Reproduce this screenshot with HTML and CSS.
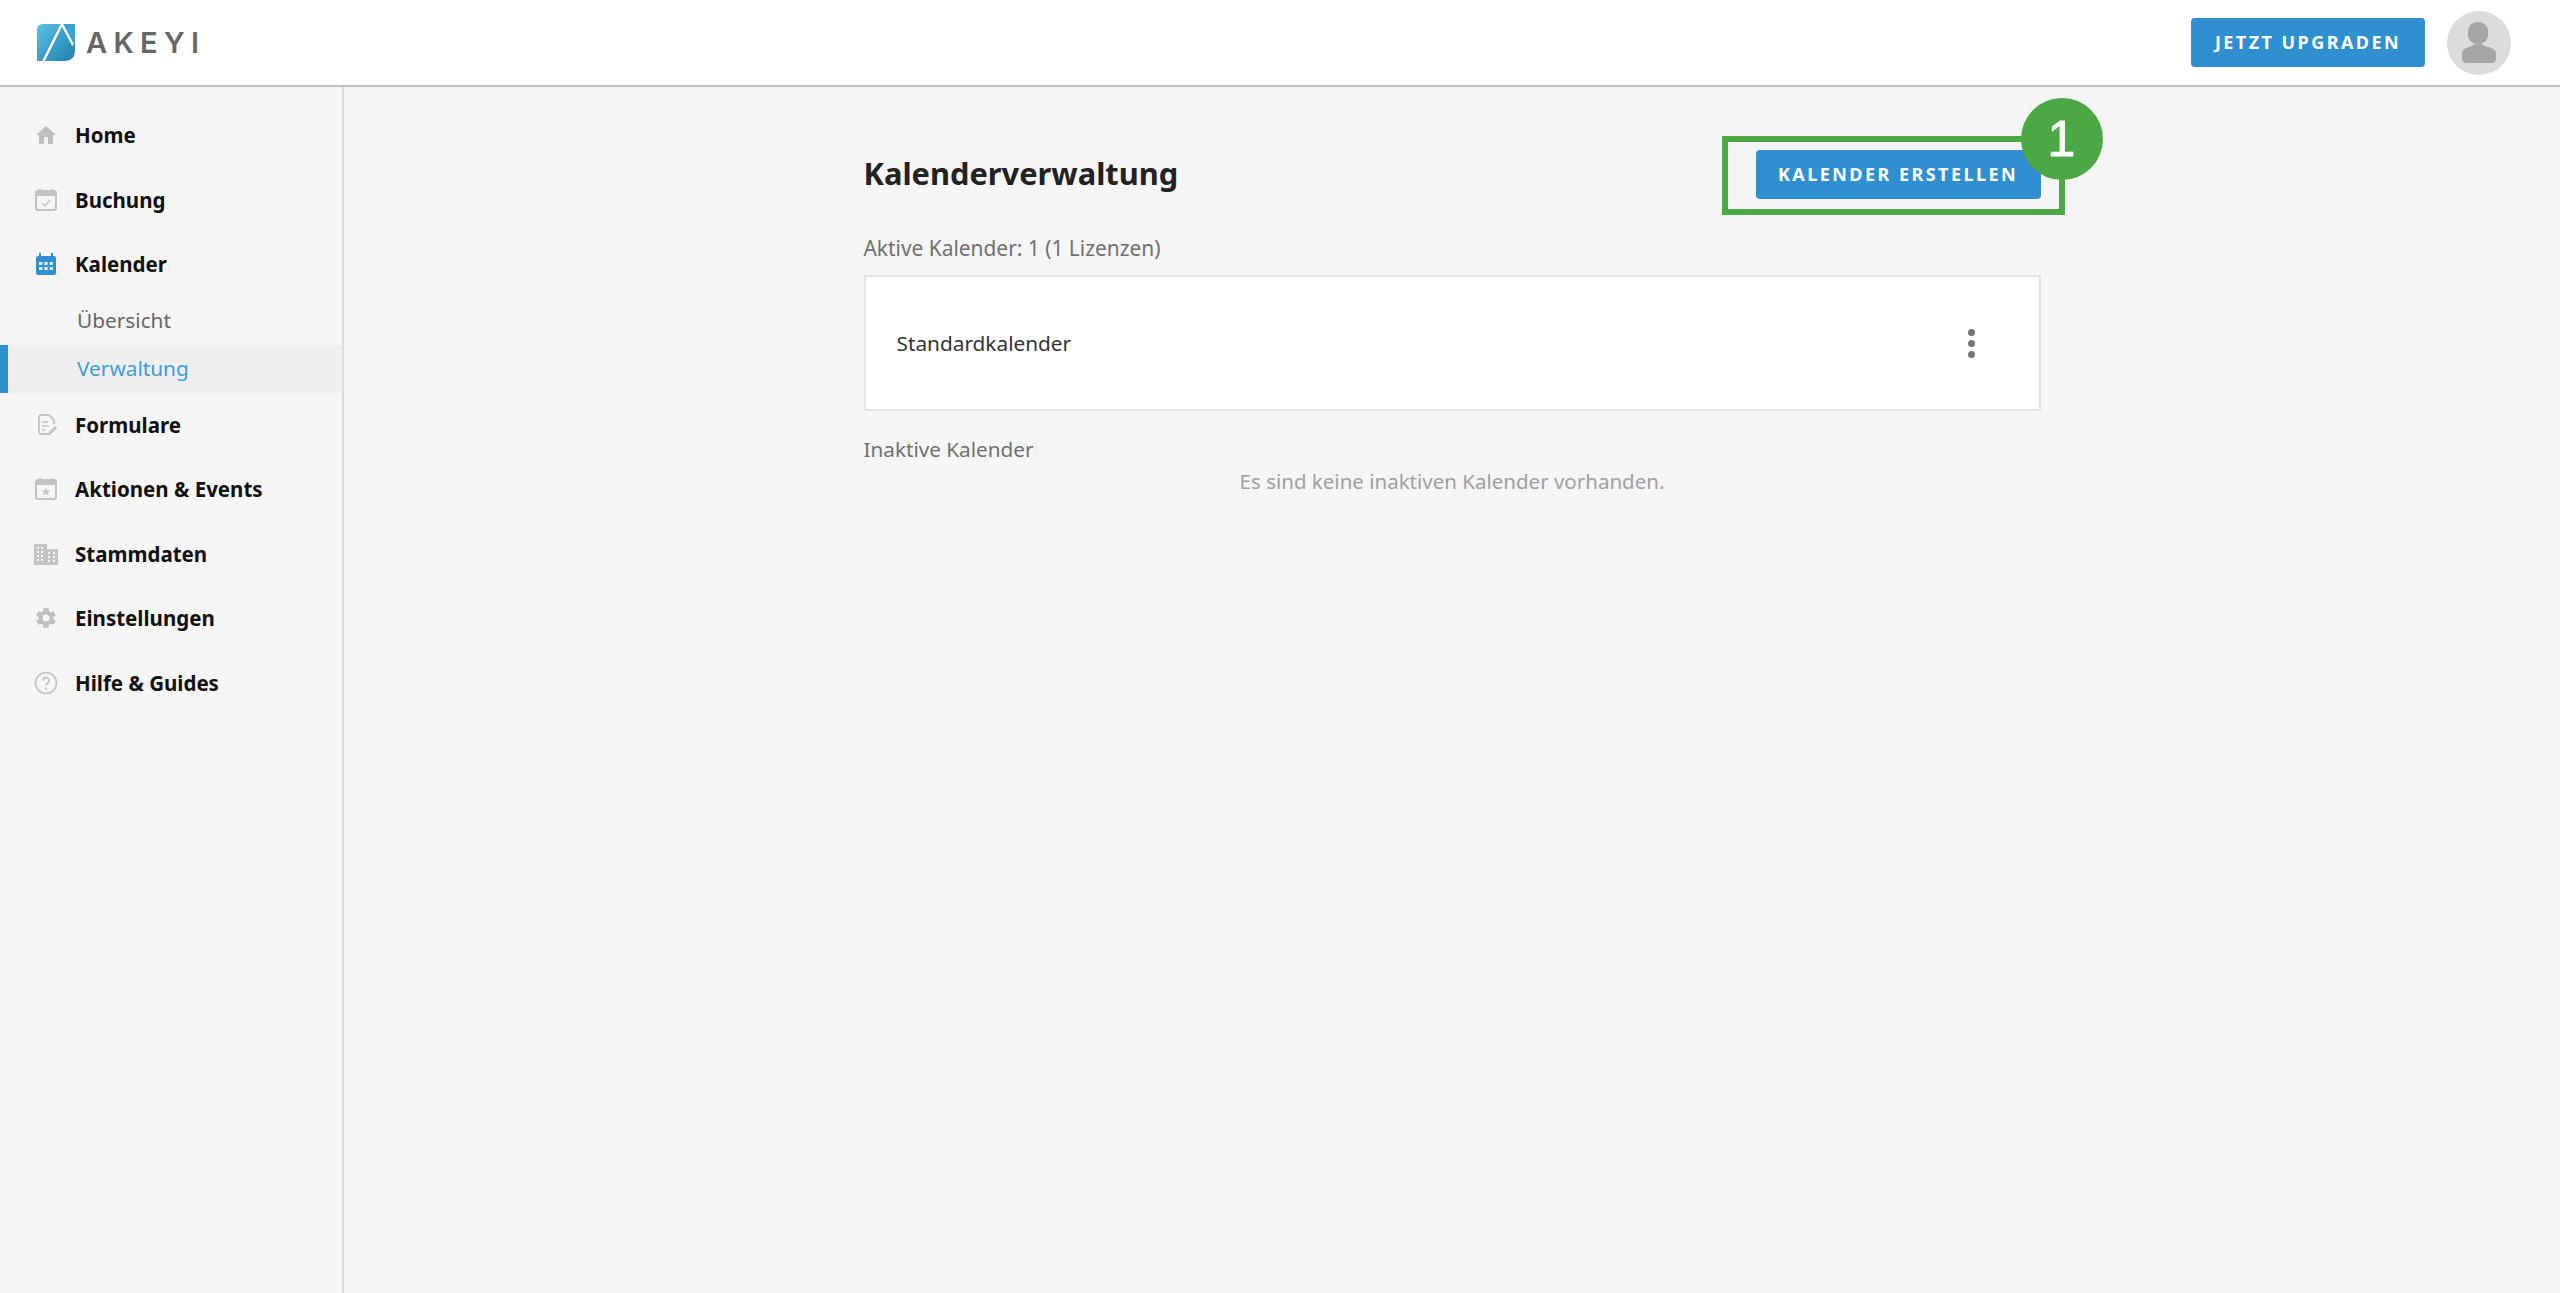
FILE: index.html
```html
<!DOCTYPE html>
<html lang="de">
<head>
<meta charset="utf-8">
<title>AKEYI – Kalenderverwaltung</title>
<link rel="stylesheet" href="styles.css">
</head>
<body>
<header class="topbar">
  <a class="logo">
    <svg class="logo-mark" viewBox="0 0 38 37" aria-hidden="true">
      <defs>
        <linearGradient id="lg" x1="0" y1="0" x2="1" y2="1">
          <stop offset="0" stop-color="#5cc0e4"/>
          <stop offset="1" stop-color="#1f7fae"/>
        </linearGradient>
      </defs>
      <path d="M6 0H38V26Q38 37 27 37H0V6Q0 0 6 0Z" fill="url(#lg)"/>
      <path d="M6 38L25 0L36 21" fill="none" stroke="#fff" stroke-width="2.4"/>
      <path d="M26.5 0H38V21Z" fill="#37a3d0"/>
    </svg>
    <span class="logo-text">AKEYI</span>
  </a>
  <div class="topbar-right">
    <button class="btn btn-upgrade">JETZT UPGRADEN</button>
    <span class="avatar">
      <svg viewBox="0 0 64 64" aria-hidden="true"><rect x="21" y="11" width="20" height="22" rx="9" fill="#a6a6a6"/><path d="M15 42Q15 37 24 35.500L28 33H35L39 35.500Q49 37 49 42V47Q49 52 44 52H20Q15 52 15 47Z" fill="#a6a6a6"/></svg>
    </span>
  </div>
</header>

<div class="layout">
  <nav class="sidebar">
    <a class="nav-item">
      <svg class="nav-icon" viewBox="0 0 24 24"><path d="M10 21v-7h4v7h5v-9h3L12 3 2 12h3v9z" fill="#bfbfbf"/></svg>
      Home
    </a>
    <a class="nav-item">
      <svg class="nav-icon" viewBox="0 0 24 24"><path d="M4 3h16a2 2 0 0 1 2 2v15a2 2 0 0 1-2 2H4a2 2 0 0 1-2-2V5a2 2 0 0 1 2-2z" fill="none" stroke="#c4c4c4" stroke-width="2"/><path d="M2 3h20v5H2zM5 1h2v3H5zM17 1h2v3h-2z" fill="#c4c4c4"/><path d="M8 15l3 3 5-6" fill="none" stroke="#c4c4c4" stroke-width="1.5"/></svg>
      Buchung
    </a>
    <a class="nav-item">
      <svg class="nav-icon" viewBox="0 0 24 24"><path d="M5 1h2v3h10V1h2v3h1a2 2 0 0 1 2 2v15a2 2 0 0 1-2 2H4a2 2 0 0 1-2-2V6a2 2 0 0 1 2-2h1z" fill="#2f8fd0"/><path d="M5 10h3.500v3H5zM10.250 10h3.500v3h-3.500zM15.500 10H19v3h-3.500zM5 15h3.500v3H5zM10.250 15h3.500v3h-3.500zM15.500 15H19v3h-3.500z" fill="#d9ecf8"/></svg>
      Kalender
    </a>
    <a class="nav-sub">Übersicht</a>
    <a class="nav-sub nav-sub-active">Verwaltung</a>
    <a class="nav-item">
      <svg class="nav-icon" viewBox="0 0 24 24"><path d="M16 21H7a2 2 0 0 1-2-2V4a2 2 0 0 1 2-2h8l5 5v4" fill="none" stroke="#c4c4c4" stroke-width="1.800"/><path d="M8 9h6M8 13h7M8 17h3" stroke="#c4c4c4" stroke-width="1.600"/><path d="M14 22l1-3 6-6 2 2-6 6z" fill="#c4c4c4"/></svg>
      Formulare
    </a>
    <a class="nav-item">
      <svg class="nav-icon" viewBox="0 0 24 24"><path d="M4 3h16a2 2 0 0 1 2 2v15a2 2 0 0 1-2 2H4a2 2 0 0 1-2-2V5a2 2 0 0 1 2-2z" fill="none" stroke="#c4c4c4" stroke-width="2"/><path d="M2 3h20v5H2zM5 1h2v3H5zM17 1h2v3h-2z" fill="#c4c4c4"/><path d="M12 10.500l1.300 2.800 3 .3-2.300 2 .7 3-2.700-1.600-2.700 1.600.7-3-2.300-2 3-.3z" fill="#c4c4c4"/></svg>
      Aktionen &amp; Events
    </a>
    <a class="nav-item">
      <svg class="nav-icon" viewBox="0 0 24 24"><path fill-rule="evenodd" d="M0 2h13v5h11v16H0zM3 5v2h2V5zM7 5v2h2V5zM3 9v2h2V9zM7 9v2h2V9zM3 13v2h2v-2zM7 13v2h2v-2zM3 17v2h2v-2zM7 17v2h2v-2zM14 10v2h2v-2zM19 10v2h2v-2zM14 14v2h2v-2zM19 14v2h2v-2zM14 18v2h2v-2zM19 18v2h2v-2z" fill="#c4c4c4"/></svg>
      Stammdaten
    </a>
    <a class="nav-item">
      <svg class="nav-icon" viewBox="0 0 24 24"><path d="M19.400 13a7.500 7.500 0 0 0 0-2l2.400-1.800-2.300-4-2.800 1.100a7.500 7.500 0 0 0-1.700-1L14.500 2.300h-5L9 5.300a7.500 7.500 0 0 0-1.700 1L4.500 5.200l-2.300 4L4.600 11a7.500 7.500 0 0 0 0 2l-2.400 1.800 2.300 4 2.800-1.100a7.500 7.500 0 0 0 1.700 1l.5 3h5l.5-3a7.500 7.500 0 0 0 1.700-1l2.800 1.100 2.300-4zM12 15.500a3.500 3.500 0 1 1 0-7 3.500 3.500 0 0 1 0 7z" fill="#bfbfbf"/></svg>
      Einstellungen
    </a>
    <a class="nav-item">
      <svg class="nav-icon" viewBox="0 0 24 24"><circle cx="12" cy="12" r="10.500" fill="none" stroke="#c4c4c4" stroke-width="1.600"/><path d="M9 9.500a3 3 0 1 1 4.500 2.600c-1 .6-1.500 1.200-1.500 2.400" fill="none" stroke="#c4c4c4" stroke-width="1.800"/><circle cx="12" cy="17.500" r="1.200" fill="#c4c4c4"/></svg>
      Hilfe &amp; Guides
    </a>
  </nav>

  <main class="main">
    <div class="content">
      <div class="page-head">
        <h1 class="page-title">Kalenderverwaltung</h1>
        <div class="create-wrap">
          <button class="btn btn-create">KALENDER ERSTELLEN</button>
          <span class="callout-box"></span>
          <span class="callout-badge">1</span>
        </div>
      </div>
      <p class="section-label section-active">Aktive Kalender: 1 (1 Lizenzen)</p>
      <div class="calendar-card">
        <span class="calendar-name">Standardkalender</span>
        <span class="kebab"><i></i><i></i><i></i></span>
      </div>
      <p class="section-label section-inactive">Inaktive Kalender</p>
      <p class="empty-note">Es sind keine inaktiven Kalender vorhanden.</p>
    </div>
  </main>
</div>
</body>
</html>
```

FILE: styles.css
```css
* { box-sizing: border-box; }
html, body { height: 100%; }
body {
  margin: 0;
  height: 100vh;
  display: flex;
  flex-direction: column;
  overflow: hidden;
  background: #f5f5f5;
  font-family: "Noto Sans", "Open Sans", sans-serif;
  color: #222;
}

.topbar {
  flex: none;
  height: 87px;
  background: #fff;
  border-bottom: 2px solid #bdbdbd;
  display: flex;
  align-items: center;
  justify-content: space-between;
  padding: 0 49px 0 37px;
}
.logo { display: flex; align-items: center; gap: 11px; }
.logo-mark { width: 38px; height: 37px; display: block; }
.logo-text {
  font-family: "Inter", sans-serif;
  font-size: 29px;
  font-weight: 600;
  letter-spacing: 6.300px;
  color: #666;
}
.topbar-right { display: flex; align-items: center; gap: 22px; }
.btn {
  border: 0;
  border-radius: 4px;
  background: #2f8fd0;
  color: #fff;
  font-family: inherit;
  font-weight: 700;
  font-size: 18px;
  letter-spacing: 2.450px;
  height: 49px;
  padding: 0 0 2px;
  text-align: center;
}
.btn-upgrade { width: 234px; }
.btn-create { width: 285px; display: block; }
.avatar {
  width: 64px;
  height: 64px;
  border-radius: 50%;
  background: #dcdcdc;
  display: block;
}
.avatar svg { display: block; width: 64px; height: 64px; }

.layout { flex: 1; display: flex; min-height: 0; }
.sidebar {
  flex: none;
  width: 344px;
  background: #f5f5f5;
  border-right: 2px solid #dcdcdc;
  padding-top: 16px;
}
.nav-item {
  display: flex;
  align-items: center;
  height: 64.500px;
  padding-left: 34px;
  gap: 17px;
  font-size: 20.500px;
  font-weight: 700;
  color: #111;
}
.nav-icon { width: 24px; height: 24px; flex: none; }
.nav-sub {
  display: flex;
  align-items: center;
  height: 48px;
  padding: 0 0 2px 77px;
  font-size: 20.800px;
  color: #666;
}
.nav-sub-active {
  background: #eeeeee;
  border-left: 8px solid #2f8fd0;
  padding-left: 69px;
  color: #3a9fd8;
}

.main { flex: 1; display: flex; justify-content: center; min-width: 0; }
.content { width: 1177px; padding-top: 63px; }
.page-head {
  display: flex;
  align-items: center;
  justify-content: space-between;
}
.page-title {
  margin: 0;
  padding-bottom: 3px;
  font-size: 30.800px;
  font-weight: 700;
  color: #222;
}
.create-wrap { position: relative; }
.callout-box {
  position: absolute;
  left: -34px;
  top: -14px;
  width: 343px;
  height: 79px;
  border: 6px solid #4ca844;
}
.callout-badge {
  position: absolute;
  left: 265px;
  top: -52px;
  width: 82px;
  height: 82px;
  border-radius: 50%;
  background: #4ca844;
  color: #fff;
  font-family: "Liberation Sans", sans-serif;
  font-size: 50px;
  font-weight: 400;
  -webkit-text-stroke: 0.8px #fff;
  line-height: 82px;
  text-align: center;
}
.section-label {
  margin: 0;
  font-size: 20.700px;
  color: #707070;
  line-height: 28px;
}
.section-active { margin-top: 35px; font-size: 20.900px; }
.calendar-card {
  margin-top: 13px;
  height: 136px;
  background: #fff;
  border: 2px solid #e4e4e4;
  display: flex;
  align-items: center;
  justify-content: space-between;
  padding: 0 64px 0 31px;
}
.calendar-name { font-size: 20.800px; color: #333; }
.kebab { display: flex; flex-direction: column; gap: 4px; }
.kebab i {
  display: block;
  width: 7px;
  height: 7px;
  border-radius: 50%;
  background: #757575;
}
.section-inactive { margin-top: 24px; }
.empty-note {
  margin: 4px 0 0;
  text-align: center;
  font-size: 20.500px;
  line-height: 28px;
  color: #a0a0a0;
}
```
